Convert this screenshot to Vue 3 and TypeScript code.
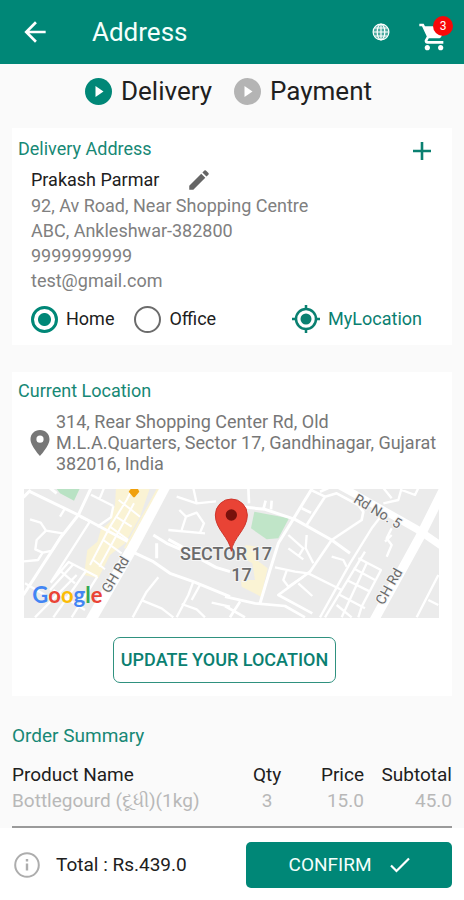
<script setup lang="ts">
import { computed, ref } from 'vue'

interface OrderLine {
  name: string
  qty: number
  price: number
}

interface Road {
  d: string
  width: number
}

const addressType = ref<'home' | 'office'>('home')
const cartCount = ref(3)
const total = 439

const addressLines: string[] = [
  '92, Av Road, Near Shopping Centre',
  'ABC, Ankleshwar-382800',
  '9999999999',
  'test@gmail.com',
]

const lines: OrderLine[] = [{ name: 'Bottlegourd (દૂધી)(1kg)', qty: 3, price: 15 }]
const totalLabel = computed(() => `Total : Rs.${total.toFixed(1)}`)

const westRoads: Road[] = [
  { d: 'M40 52 L62 30 M60 35 L205 105 L243 24 M120 24 L140 40 M205 105 L372 195 M205 105 L150 175 L40 345', width: 9 },
  { d: 'M243 44 L310 78 M268 58 L282 24 M310 78 L303 112 L262 140 M165 85 L150 110 M60 118 L92 128 L108 152 L158 160 L128 210', width: 7 },
  { d: 'M108 152 L80 180 L76 208 L98 218 L84 240 L42 244 M98 218 L128 212', width: 7 },
  { d: 'M210 110 L240 124 L122 308 M122 308 L176 246 L262 290 M188 255 L120 330 M150 272 L195 310 M230 270 L130 412 M262 290 L185 412 M200 285 L75 412 M45 310 L130 360 M130 330 L225 390', width: 7 },
  { d: 'M268 260 L372 70 M300 140 L355 180 M318 110 L365 140 M280 180 L335 220 M250 240 L285 268 M326 60 L390 110 M240 255 L300 140 L350 60 L368 24', width: 6 },
  { d: 'M430 165 L470 190 L540 220 L618 262 L660 275 M440 190 L440 235 M475 178 L530 208 M372 218 L430 245 L480 280 L550 305 L660 350', width: 9 },
  { d: 'M475 150 L585 160 M508 90 L528 110 L515 150 M528 110 L560 98 L582 130 L570 158 M500 50 L560 70 L618 64 M550 24 L560 70', width: 7 },
  { d: 'M445 292 L410 335 L368 412 M398 362 L455 385 L490 412 M550 305 L535 345 L500 412 M515 372 L560 388 L585 412 M605 368 L660 380 M570 315 L545 360', width: 7 },
]

const eastRoads: Road[] = [
  { d: 'M0 75 L120 88 L210 118 L320 180 L375 220 M262 24 L200 125 L160 190 L135 270 L105 370', width: 9 },
  { d: 'M0 350 L90 370 L180 378 L240 412 M70 24 L72 70 M115 88 L122 62 M138 88 L140 62 M45 365 L15 412 M0 378 L60 412', width: 8 },
  { d: 'M262 32 L300 50 L335 40 L400 75 L415 95 L410 120 L320 180 L255 275 L160 345 L262 400 M300 50 L245 135 M230 85 L258 98 M285 35 L310 24', width: 8 },
  { d: 'M475 100 L440 145 L375 250 L285 412 M420 215 L300 412 M400 235 L468 270 L410 380 L400 412 M345 345 L420 385 M385 265 L450 300 M365 300 L435 335 M425 250 L350 412', width: 7 },
  { d: 'M190 165 L235 205 L220 230 M190 205 L235 238 M245 165 L242 205 L265 250 M150 262 L210 275 L250 280 L350 330 M185 272 L175 300 L190 320 L235 290 M220 310 L262 348 M320 230 L355 240 L365 260', width: 7 },
  { d: 'M475 24 L500 55 M530 30 L570 45 L580 24 M475 70 L520 60 L530 24 M500 145 L485 175 L500 195 L485 230 M500 165 L480 185 M640 285 L575 412 M610 360 L640 375 M335 375 L380 412', width: 7 },
]
</script>

<template>
  <div class="screen">
    <header class="bar">
      <button class="icon-button" type="button" aria-label="Back">
        <svg width="32" height="32" viewBox="0 0 24 24" fill="#fff"><path d="M20 11H7.83l5.59-5.59L12 4l-8 8 8 8 1.41-1.41L7.83 13H20z" /></svg>
      </button>
      <h1>Address</h1>
      <button class="icon-button" type="button" aria-label="Language">
        <svg width="18" height="18" viewBox="0 0 18 18" fill="none" stroke="#fff" stroke-width="1.2">
          <circle cx="9" cy="9" r="7.9" fill="#fff" fill-opacity=".3" />
          <ellipse cx="9" cy="9" rx="3.8" ry="7.9" />
          <path d="M9 1v16M1 9h16M2.4 5h13.2M2.4 13h13.2" />
        </svg>
      </button>
      <button class="icon-button cart" type="button" aria-label="Cart">
        <svg width="32" height="32" viewBox="0 0 24 24" fill="#fff"><path d="M7 18c-1.1 0-1.99.9-1.99 2S5.9 22 7 22s2-.9 2-2-.9-2-2-2zM1 2v2h2l3.6 7.59-1.35 2.45c-.16.28-.25.61-.25.96 0 1.1.9 2 2 2h12v-2H7.42c-.14 0-.25-.11-.25-.25l.03-.12.9-1.63h7.45c.75 0 1.41-.41 1.75-1.03l3.58-6.49A1 1 0 0 0 20 4H5.21l-.94-2H1zm16 16c-1.1 0-1.99.9-1.99 2s.89 2 1.99 2 2-.9 2-2-.9-2-2-2z" /></svg>
        <span class="badge">{{ cartCount }}</span>
      </button>
    </header>

    <nav class="steps" aria-label="Checkout steps">
      <a href="#delivery" class="step active">
        <svg width="27" height="27" viewBox="0 0 27 27"><circle cx="13.5" cy="13.5" r="13.5" fill="currentColor" /><path d="M10.5 8v11l8-5.5z" fill="#fff" /></svg>
        <span>Delivery</span>
      </a>
      <a href="#payment" class="step">
        <svg width="27" height="27" viewBox="0 0 27 27"><circle cx="13.5" cy="13.5" r="13.5" fill="currentColor" /><path d="M10.5 8v11l8-5.5z" fill="#fff" /></svg>
        <span>Payment</span>
      </a>
    </nav>

    <main>
      <section class="card delivery">
        <div class="card-head">
          <h2>Delivery Address</h2>
          <button class="icon-button add" type="button" aria-label="Add address">
            <svg width="20" height="20" viewBox="0 0 20 20" fill="none" stroke="#0a8071" stroke-width="2.6"><path d="M10 1v18M1 10h18" /></svg>
          </button>
        </div>
        <div class="person">
          <strong>Prakash Parmar</strong>
          <button class="icon-button" type="button" aria-label="Edit address">
            <svg width="26" height="26" viewBox="0 0 24 24" fill="#666"><path d="M3 17.25V21h3.75L17.81 9.94l-3.75-3.75zM20.71 7.04a1 1 0 0 0 0-1.41l-2.34-2.34a1 1 0 0 0-1.41 0l-1.83 1.83 3.75 3.75z" /></svg>
          </button>
        </div>
        <address>
          <span v-for="line in addressLines" :key="line">{{ line }}</span>
        </address>
        <div class="choices">
          <label><input v-model="addressType" type="radio" name="address-type" value="home" />Home</label>
          <label><input v-model="addressType" type="radio" name="address-type" value="office" />Office</label>
          <button class="locate" type="button">
            <svg width="28" height="28" viewBox="0 0 28 28" fill="none" stroke="currentColor" stroke-width="2.5"><circle cx="14" cy="14" r="10" /><circle cx="14" cy="14" r="5.5" fill="currentColor" stroke="none" /><path d="M14 0v5M14 23v5M0 14h5M23 14h5" /></svg>
            <span>MyLocation</span>
          </button>
        </div>
      </section>

      <section class="card current">
        <h2>Current Location</h2>
        <div class="place">
          <svg width="20" height="26" viewBox="0 0 20 26" fill="#777"><path fill-rule="evenodd" d="M10 0C4.5 0 .5 4 .5 9.3.5 16 10 26 10 26s9.5-10 9.5-16.7C19.5 4 15.5 0 10 0zm0 5.6a3.6 3.6 0 1 1 0 7.2 3.6 3.6 0 0 1 0-7.2z" /></svg>
          <p>314, Rear Shopping Center Rd, Old M.L.A.Quarters, Sector 17, Gandhinagar, Gujarat 382016, India</p>
        </div>
        <svg class="map" viewBox="0 0 1245 387" preserveAspectRatio="xMidYMid slice" role="img" aria-label="Map of Sector 17">
          <rect width="1245" height="387" fill="#ebebeb" />
          <g transform="translate(-42 -27)">
            <path d="M138 24H210L192 62 150 40z" fill="#b9e2c4" />
            <path d="M318 24H420L390 110 345 190 300 225 265 295 222 285 232 210 262 185 272 150 300 125 315 75z" fill="#faf3d4" />
          </g>
          <g transform="translate(603 -27)">
            <path d="M88 95L192 115 160 175 125 178 78 145z" fill="#c0e5c8" />
            <path d="M62 195L98 200 95 240 128 265 108 350 50 320 48 300 90 300 82 250 55 235z" fill="#faf3d4" />
          </g>
          <g class="roads" transform="translate(-42 -27)">
            <path v-for="road in westRoads" :key="road.d" :d="road.d" :stroke-width="road.width" />
            <path d="M470 10L372 195 240 425" stroke-width="32" />
            <path class="lane" d="M445 24L345 205" stroke-width="6" />
          </g>
          <g class="roads" transform="translate(603 -27)">
            <path v-for="road in eastRoads" :key="road.d" :d="road.d" :stroke-width="road.width" />
            <path d="M340 15L430 65 580 150 660 205" stroke-width="22" />
            <path d="M655 30L585 170 445 425" stroke-width="28" />
          </g>
          <path d="M320 0h22l4 8-14 17h-4l-14-17z" fill="#f0a00c" />
          <g class="map-text">
            <text x="468" y="214" class="sector">SECTOR 17</text>
            <text x="622" y="275" class="sector">17</text>
            <text transform="translate(256 315) rotate(-59)">GH Rd</text>
            <text transform="translate(986 38) rotate(31)">Rd No. 5</text>
            <text transform="translate(1078 350) rotate(-60)">CH Rd</text>
          </g>
          <path d="M622 187C617 145 574 122 574 78a48 48 0 0 1 96 0c0 44-43 67-48 109z" fill="#e94335" stroke="#ce352b" stroke-width="3" />
          <circle cx="622" cy="78" r="17" fill="#79110c" />
          <text class="google" x="25" y="341"><tspan fill="#4285f4">G</tspan><tspan fill="#ea4335">o</tspan><tspan fill="#fbbc05">o</tspan><tspan fill="#4285f4">g</tspan><tspan fill="#34a853">l</tspan><tspan fill="#ea4335">e</tspan></text>
        </svg>
        <button class="update" type="button">UPDATE YOUR LOCATION</button>
      </section>

      <section class="summary">
        <h2>Order Summary</h2>
        <table>
          <thead>
            <tr><th>Product Name</th><th>Qty</th><th>Price</th><th>Subtotal</th></tr>
          </thead>
          <tbody>
            <tr v-for="line in lines" :key="line.name">
              <td>{{ line.name }}</td>
              <td>{{ line.qty }}</td>
              <td>{{ line.price.toFixed(1) }}</td>
              <td>{{ (line.qty * line.price).toFixed(1) }}</td>
            </tr>
          </tbody>
        </table>
      </section>
    </main>

    <footer>
      <svg width="26" height="26" viewBox="0 0 26 26" fill="none" stroke="#adadad" stroke-width="2"><circle cx="13" cy="13" r="11.8" /><path d="M13 11.5v7M13 7v2.5" stroke-width="2.4" /></svg>
      <output>{{ totalLabel }}</output>
      <button class="confirm" type="button">
        <span>CONFIRM</span>
        <svg width="20" height="16" viewBox="0 0 20 16" fill="none" stroke="#fff" stroke-width="2.2"><path d="M1 8.5L6.5 14 19 1.5" /></svg>
      </button>
    </footer>
  </div>
</template>

<style>
body {
  background: #fff;
}
</style>

<style scoped>
.screen {
  min-height: 100vh;
  display: flex;
  flex-direction: column;
  background: #fafafa;
  color: #202020;
  font-family: Roboto, "Noto Sans", sans-serif;
  font-size: 18px;
  line-height: 24px;
}

* {
  box-sizing: border-box;
}

h1,
h2,
p {
  margin: 0;
  font-weight: 400;
}

button {
  font: inherit;
  cursor: pointer;
}

svg {
  display: block;
  flex: none;
}

.icon-button {
  display: flex;
  padding: 0;
  border: 0;
  background: none;
}

.bar {
  display: flex;
  align-items: center;
  height: 64px;
  padding: 0 14px 0 19px;
  background: #008777;
  color: #f4fffc;
}

.bar h1 {
  flex: 1;
  margin-left: 41px;
  font-size: 26px;
  line-height: 36px;
}

.cart {
  position: relative;
  margin: 10px 0 0 28px;
}

.badge {
  position: absolute;
  top: -5px;
  right: -3px;
  width: 20px;
  height: 20px;
  border-radius: 50%;
  background: #f80808;
  color: #fff;
  font-size: 12px;
  line-height: 20px;
  text-align: center;
}

.steps {
  display: flex;
  justify-content: center;
  gap: 22px;
  height: 64px;
  padding: 11px 7px 0 0;
}

.step {
  display: flex;
  gap: 9px;
  height: 32px;
  align-items: center;
  color: #b4b4b4;
  text-decoration: none;
  font-size: 26px;
  line-height: 32px;
}

.step.active {
  color: #008777;
}

.step span {
  color: #202020;
}

main {
  padding: 0 12px;
}

h2 {
  color: #178875;
  font-size: 18px;
  line-height: 24px;
}

.card {
  background: #fff;
}

.delivery {
  padding: 9px 20px 10px 6px;
}

.card-head {
  display: flex;
  justify-content: space-between;
  align-items: center;
}

.add {
  margin-top: 4px;
}

.person {
  display: flex;
  align-items: center;
  gap: 27px;
  height: 32px;
  padding: 6px 0 0 13px;
}

.person strong {
  font-weight: 400;
}

address {
  display: flex;
  flex-direction: column;
  padding-left: 13px;
  color: #808080;
  font-style: normal;
  line-height: 25px;
}

.choices {
  display: flex;
  align-items: center;
  gap: 20px;
  height: 42px;
  padding: 10px 4px 0 13px;
}

.choices label {
  display: flex;
  align-items: center;
  gap: 8px;
}

.choices input {
  appearance: none;
  width: 27px;
  height: 27px;
  margin: 0;
  border: 2px solid #6c6c6c;
  border-radius: 50%;
}

.choices input:checked {
  border: 3px solid #008777;
  background: radial-gradient(circle, #008777 6px, transparent 7px);
}

.locate {
  display: flex;
  align-items: center;
  gap: 8px;
  margin-left: auto;
  padding: 0 6px;
  border: 0;
  background: none;
  color: #0a8071;
}

.current {
  display: flex;
  flex-direction: column;
  margin-top: 27px;
  padding: 7px 13px 13px 12px;
}

.current h2 {
  margin-left: -6px;
}

.place {
  display: flex;
  align-items: center;
  gap: 6px;
  padding: 8px 0 15px 6px;
  color: #777;
}

.place p {
  line-height: 21px;
}

.map {
  width: 100%;
  height: auto;
}

.roads path {
  fill: none;
  stroke: #fff;
  stroke-linejoin: round;
}

.roads .lane {
  stroke: #faf3d4;
}

.map-text {
  fill: #6b6b6b;
  stroke: #f5f5f5;
  stroke-width: 6px;
  paint-order: stroke;
  font-size: 42px;
}

.sector {
  font-size: 54px;
  font-weight: 500;
}

.google {
  font-family: Lato, sans-serif;
  font-size: 66px;
  font-weight: 700;
}

.update {
  align-self: center;
  height: 46px;
  margin: 19px 14px 0 0;
  padding: 0 7px;
  border: 1px solid #2f917f;
  border-radius: 7px;
  background: #fff;
  color: #0a8071;
  font-weight: 500;
}

.summary {
  padding: 28px 0 14px;
}

.summary,
.summary h2,
footer {
  font-size: 19px;
}

table {
  width: 100%;
  margin-top: 14px;
  border-collapse: collapse;
  table-layout: fixed;
}

th,
td {
  padding: 0;
  font-weight: 400;
  line-height: 26px;
  text-align: right;
}

th:first-child,
td:first-child {
  width: 50%;
  text-align: left;
}

th:nth-child(2),
td:nth-child(2) {
  width: 16%;
  text-align: center;
}

th:nth-child(3) {
  width: 14%;
}

td {
  color: #b8b8b8;
}

footer {
  display: flex;
  flex: 1;
  align-items: flex-start;
  position: relative;
  padding: 14px 12px 12px 14px;
  background: #fff;
}

footer::before {
  content: "";
  position: absolute;
  top: -2px;
  left: 12px;
  right: 12px;
  height: 2px;
  background: #9a9a9a;
}

footer > svg {
  margin-top: 10px;
}

footer output {
  flex: 1;
  margin-left: 16px;
  line-height: 46px;
}

.confirm {
  display: flex;
  align-items: center;
  justify-content: center;
  gap: 18px;
  flex: 0 0 47%;
  height: 46px;
  border: 0;
  border-radius: 5px;
  background: #008777;
  color: #f4fffc;
}
</style>
